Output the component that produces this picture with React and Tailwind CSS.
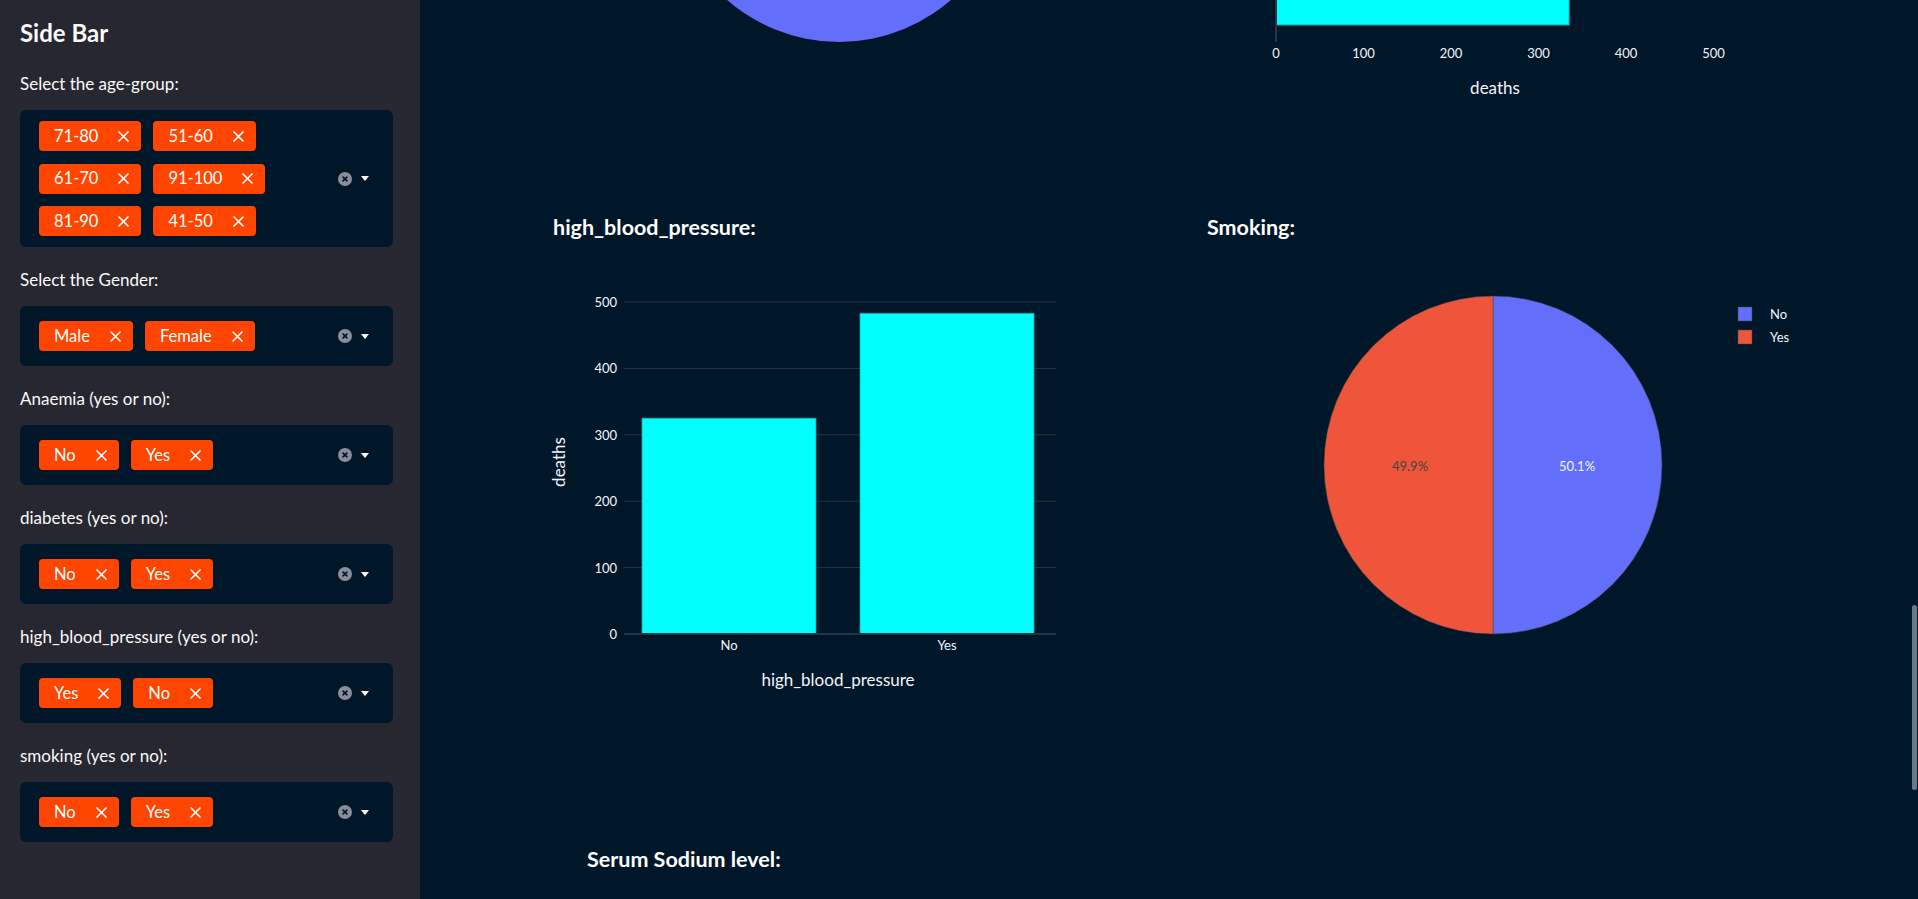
const sidebarFilters = [
  { label: "Select the age-group:", tags: ["71-80", "51-60", "61-70", "91-100", "81-90", "41-50"] },
  { label: "Select the Gender:", tags: ["Male", "Female"] },
  { label: "Anaemia (yes or no):", tags: ["No", "Yes"] },
  { label: "diabetes (yes or no):", tags: ["No", "Yes"] },
  { label: "high_blood_pressure (yes or no):", tags: ["Yes", "No"] },
  { label: "smoking (yes or no):", tags: ["No", "Yes"] },
];

const tick = "fill-[#f2f5fa] text-[13px]";
const axisTitle = "fill-[#f2f5fa] text-[17px]";

function TagX() {
  return (
    <svg width="11" height="11" viewBox="0 0 11 11">
      <path d="M1 1 L10 10 M10 1 L1 10" stroke="white" strokeWidth="1.7" strokeLinecap="round" />
    </svg>
  );
}

function Tag({ text }) {
  return (
    <div className="flex items-center h-[30px] rounded-[4px] bg-[#ff4500] pl-[15px] pr-[12px] gap-[20px] text-white text-[16.5px]">
      <span>{text}</span>
      <TagX />
    </div>
  );
}

function MultiSelect({ label, tags }) {
  return (
    <div className="mb-[20px]">
      <div className="h-[26px] leading-[26px] mb-[13px] text-[17px] text-[#fafafa]">{label}</div>
      <div className="flex items-center min-h-[60px] rounded-[6px] bg-[#001729] pl-[19px] pr-[24px] py-[11px]">
        <div className="flex flex-wrap gap-x-[12px] gap-y-[12.5px] flex-1">
          {tags.map((t) => (
            <Tag key={t} text={t} />
          ))}
        </div>
        <div className="flex items-center gap-[9px]">
          <svg width="14" height="14" viewBox="0 0 14 14">
            <circle cx="7" cy="7" r="7" fill="#8a8d98" />
            <path d="M4.6 4.6 L9.4 9.4 M9.4 4.6 L4.6 9.4" stroke="#001729" strokeWidth="1.6" />
          </svg>
          <svg width="8" height="5" viewBox="0 0 8 5">
            <path d="M0 0 L8 0 L4 5 Z" fill="white" />
          </svg>
        </div>
      </div>
    </div>
  );
}

function Sidebar() {
  return (
    <aside className="w-[420px] shrink-0 bg-[#262730] pl-[20px] pr-[27px] pt-[18px] h-[899px]">
      <h2 className="text-[24px] font-bold text-[#fafafa] leading-[29px] mb-[24px]">Side Bar</h2>
      {sidebarFilters.map((f) => (
        <MultiSelect key={f.label} label={f.label} tags={f.tags} />
      ))}
    </aside>
  );
}

function TopPie() {
  return (
    <svg width="622" height="110">
      <circle cx="286" cy="-128" r="170" fill="#636efa" />
    </svg>
  );
}

function TopBar() {
  const x0 = 69;
  const per = 87.5;
  return (
    <svg width="622" height="110">
      <rect x={x0} y="-10" width={(335 * per) / 100} height="35" fill="#00ffff" stroke="#10a5a5" strokeWidth="1" />
      <line x1={x0} y1="0" x2={x0} y2="42" stroke="#283442" strokeWidth="2" />
      {[0, 100, 200, 300, 400, 500].map((v, i) => (
        <text key={v} x={x0 + i * per} y="58" textAnchor="middle" className={tick}>
          {v}
        </text>
      ))}
      <text x="288" y="94" textAnchor="middle" className={axisTitle}>
        deaths
      </text>
    </svg>
  );
}

function BpBar() {
  const base = 384;
  const per = 66.4;
  const bars = [
    { label: "No", x: 89, v: 325 },
    { label: "Yes", x: 307, v: 483 },
  ];
  return (
    <svg width="622" height="470" className="overflow-visible">
      {[100, 200, 300, 400, 500].map((v) => (
        <line key={v} x1="71" x2="503" y1={base - (v * per) / 100} y2={base - (v * per) / 100} stroke="#283442" strokeWidth="1" />
      ))}
      {bars.map((b) => (
        <rect key={b.label} x={b.x} y={base - (b.v * per) / 100} width="174" height={(b.v * per) / 100} fill="#00ffff" stroke="#10a5a5" strokeWidth="0.8" />
      ))}
      <line x1="71" x2="503" y1={base} y2={base} stroke="#283442" strokeWidth="2" />
      {[0, 100, 200, 300, 400, 500].map((v) => (
        <text key={v} x="64" y={base - (v * per) / 100 + 5} textAnchor="end" className={tick}>
          {v}
        </text>
      ))}
      {bars.map((b) => (
        <text key={b.label} x={b.x + 87} y="400" textAnchor="middle" className={tick}>
          {b.label}
        </text>
      ))}
      <text x="285" y="436" textAnchor="middle" className={axisTitle}>
        high_blood_pressure
      </text>
      <text x="12" y="212" textAnchor="middle" transform="rotate(-90 12 212)" className={axisTitle}>
        deaths
      </text>
    </svg>
  );
}

function SmokingPie() {
  const cx = 286;
  const cy = 215;
  const r = 169;
  return (
    <svg width="622" height="470">
      <path d={`M${cx} ${cy - r} A${r} ${r} 0 0 1 ${cx} ${cy + r} Z`} fill="#636efa" stroke="#444" strokeWidth="0.5" />
      <path d={`M${cx} ${cy + r} A${r} ${r} 0 0 1 ${cx} ${cy - r} Z`} fill="#ef553b" stroke="#444" strokeWidth="0.5" />
      <text x="203" y="221" textAnchor="middle" className="fill-[#444444] text-[13px]">
        49.9%
      </text>
      <text x="370" y="221" textAnchor="middle" className={tick}>
        50.1%
      </text>
      <rect x="531" y="57" width="14" height="14" fill="#636efa" stroke="#444" strokeWidth="0.5" />
      <rect x="531" y="80" width="14" height="14" fill="#ef553b" stroke="#444" strokeWidth="0.5" />
      <text x="563" y="69" className={tick}>No</text>
      <text x="563" y="92" className={tick}>Yes</text>
    </svg>
  );
}

function Heading({ children }) {
  return <h3 className="h-[38px] leading-[30px] text-[21.5px] font-bold text-white">{children}</h3>;
}

export default function App() {
  return (
    <div className="flex w-[1918px] h-[899px] overflow-hidden bg-[#001729] font-[Lato,'Noto_Sans',sans-serif]">
      <Sidebar />
      <main className="relative flex-1 flex flex-col pl-[133px]">
        <div className="flex gap-[32px] h-[110px]">
          <TopPie />
          <TopBar />
        </div>
        <div className="flex gap-[32px] mt-[102px]">
          <div className="w-[622px]">
            <Heading>high_blood_pressure:</Heading>
            <BpBar />
          </div>
          <div className="w-[622px]">
            <Heading>Smoking:</Heading>
            <SmokingPie />
          </div>
        </div>
        <div className="mt-[124px] pl-[34px]">
          <Heading>Serum Sodium level:</Heading>
        </div>
        <div className="absolute right-[1px] top-[605px] w-[5px] h-[185px] rounded-full bg-[#6b7885]" />
      </main>
    </div>
  );
}
